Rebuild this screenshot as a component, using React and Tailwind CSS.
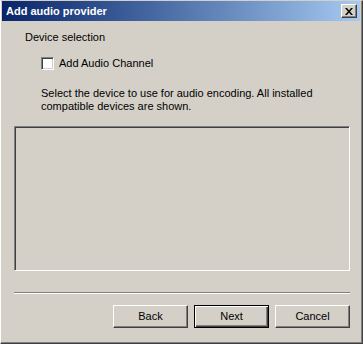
import React from 'react';

const font = { fontFamily: '"Liberation Sans", Arial, sans-serif' };

function CloseButton() {
  return (
    <div className="w-[16px] h-[14px] bg-[#d4d0c8] border-t border-l border-white border-r border-b border-r-[#404040] border-b-[#404040] flex items-center justify-center shadow-[inset_-1px_-1px_0_#808080]">
      <svg width="8" height="7" viewBox="0 0 8 7" className="block">
        <path d="M0 0h2l2 2.5L6 0h2L5 3.5 8 7H6L4 4.5 2 7H0l3-3.5z" fill="#000" />
      </svg>
    </div>
  );
}

function Button({ label, primary }) {
  return (
    <button
      type="button"
      className={`w-[75px] h-[23px] bg-[#d4d0c8] text-[11px] text-black leading-none flex items-center justify-center ${
        primary
          ? 'border border-black shadow-[inset_1px_1px_0_#fff,inset_-1px_-1px_0_#404040,inset_-2px_-2px_0_#808080]'
          : 'border-t border-l border-white border-r border-b border-r-[#404040] border-b-[#404040] shadow-[inset_-1px_-1px_0_#808080]'
      }`}
      style={font}
    >
      {label}
    </button>
  );
}

export default function App() {
  return (
    <div className="w-[363px] h-[344px] overflow-hidden bg-[#d4d0c8]" style={font}>
      <div className="w-full h-full flex flex-col border-t border-l border-t-[#d4d0c8] border-l-white border-r border-b border-r-[#404040] border-b-[#404040]">
        <div className="flex-1 flex flex-col pl-[1px] pr-[1px] border-r border-b border-r-[#808080] border-b-[#808080]">
          {/* title bar */}
          <div className="h-[20px] flex items-center justify-between pl-[4px] pr-[3px] bg-gradient-to-r from-[#0a246a] to-[#a6caf0]">
            <span className="text-white font-bold text-[11px] leading-none">Add audio provider</span>
            <CloseButton />
          </div>

          {/* body */}
          <div className="flex-1 flex flex-col text-[11px] leading-[13px] text-black">
            <div className="mt-[10px] pl-[23px]">Device selection</div>
            <div className="mt-[13px] pl-[39px] flex items-center gap-[5px]">
              <div className="w-[13px] h-[13px] bg-white border-t border-l border-t-[#808080] border-l-[#808080] border-r border-b border-white shadow-[inset_1px_1px_0_#404040,inset_-1px_-1px_0_#d4d0c8]" />
              <span>Add Audio Channel</span>
            </div>
            <p className="mt-[17px] pl-[39px] w-[330px]">
              Select the device to use for audio encoding. All installed compatible devices are shown.
            </p>

            <div className="mt-[13px] ml-[12px] w-[336px] h-[145px] border-t border-l border-[#808080] border-r border-b border-r-white border-b-white shadow-[inset_1px_1px_0_#404040]" />

            <div className="mt-[21px] ml-[12px] w-[336px] h-[2px] border-t border-t-[#808080] border-b border-b-white" />

            <div className="mt-[11px] pr-[10px] flex justify-end gap-[6px]">
              <Button label="Back" />
              <Button label="Next" primary />
              <Button label="Cancel" />
            </div>
          </div>
        </div>
      </div>
    </div>
  );
}
